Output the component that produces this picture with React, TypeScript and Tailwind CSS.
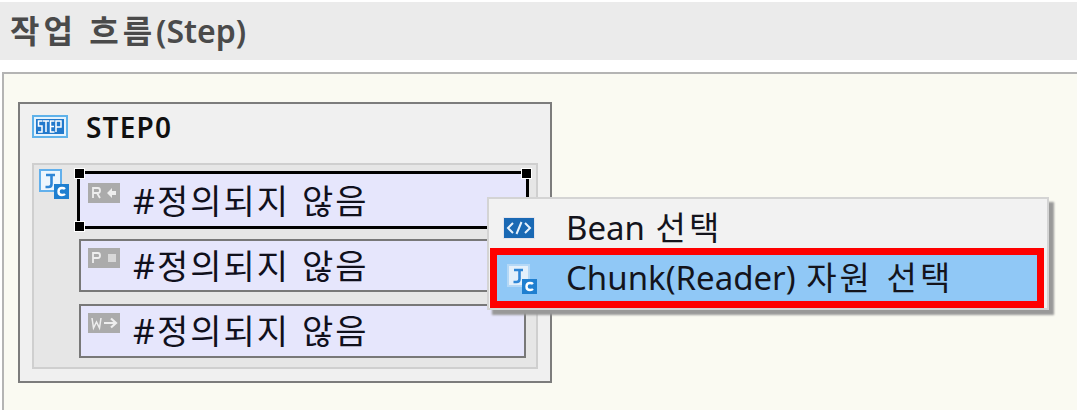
import type { ReactNode } from "react";

const font = "font-['Noto_Sans','Noto_Sans_CJK_KR',sans-serif]";

function JcIcon({ light = false }: { light?: boolean }) {
  return (
    <svg width="30" height="30" viewBox="0 0 30 30" className="shrink-0">
      <rect x="1" y="1" width="21" height="21" fill={light ? "#e4f0fb" : "#eef6fd"} stroke={light ? "#b4d8f6" : "#62b0ec"} strokeWidth="2" />
      <path d="M7 6h9M12.500 6v9q0 3-3 3H6.500" fill="none" stroke="#2f86d6" strokeWidth="2.600" />
      <rect x="15" y="15" width="15" height="15" fill="#1f7fd0" />
      <path d="M26 20q-1-1-3-1-3.500 0-3.500 3.500T23 26q2 0 3-1" fill="none" stroke="#fff" strokeWidth="2.400" />
    </svg>
  );
}

function StepIcon() {
  return (
    <svg width="36" height="23" viewBox="0 0 36 23" className="shrink-0">
      <rect x="1" y="1" width="34" height="21" fill="#e6f3fc" stroke="#5fb2ea" strokeWidth="2" />
      <rect x="4" y="4" width="28" height="15" fill="#2279cc" />
      <path d="M10.500 6H6.500v5h3.500v6H6M11 6h6M14 6v11M22.500 6H18.500v11h4M18.500 11.500h3.500M24 17V6h5v6h-5" fill="none" stroke="#fff" strokeWidth="1.500" />
    </svg>
  );
}

function BadgeIcon({ kind }: { kind: "R" | "P" | "W" }) {
  return (
    <svg width="32" height="20" viewBox="0 0 32 20" className="shrink-0">
      <rect width="32" height="20" fill="#ababab" />
      {kind === "R" && <path d="M5 15V5h5q2 0 2 2.500T10 10H5M9 10l3 5" fill="none" stroke="#eee" strokeWidth="1.800" />}
      {kind === "R" && <path d="M19 10l5-5v3h4v4h-4v3z" fill="#eee" />}
      {kind === "P" && <path d="M5 15V5h5q2 0 2 2.500T10 10H5" fill="none" stroke="#eee" strokeWidth="1.800" />}
      {kind === "P" && <rect x="20" y="6" width="8" height="8" fill="#d8d8d8" />}
      {kind === "W" && <path d="M4 5l1.500 10L8.500 9l3 6L13 5" fill="none" stroke="#eee" strokeWidth="1.500" />}
      {kind === "W" && <path d="M16 10h11M23 5.500l5 4.500-5 4.500" fill="none" stroke="#eee" strokeWidth="2.200" />}
    </svg>
  );
}

function Handle({ className }: { className: string }) {
  return <span className={`absolute h-[9px] w-[9px] bg-black outline outline-1 outline-white ${className}`} />;
}

function Row({ kind, selected, className, children }: { kind: "R" | "P" | "W"; selected?: boolean; className: string; children: ReactNode }) {
  return (
    <div className={`relative flex items-start bg-[#e6e6fc] ${selected ? "border-[3px] border-black pl-[8px] pt-[9px]" : "border-2 border-[#787878] pl-[7px] pt-[7px]"} ${className}`}>
      <BadgeIcon kind={kind} />
      <span className="ml-[13px] mt-[-2px] text-[34px] leading-[40px] tracking-[2px] text-[#10101c] [word-spacing:1px]">{children}</span>
      {selected && (
        <>
          <Handle className="left-[-5px] top-[-5px]" />
          <Handle className="right-[-5px] top-[-5px]" />
          <Handle className="left-[-5px] bottom-[-5px]" />
          <Handle className="right-[-5px] bottom-[-5px]" />
        </>
      )}
    </div>
  );
}

export default function App() {
  return (
    <div className={`relative flex h-[410px] w-[1077px] flex-col overflow-hidden bg-white pt-[2px] ${font}`}>
      {/* Title */}
      <div className="flex h-[58px] shrink-0 items-center bg-[#ebebeb] pl-[10px] text-[32px] font-semibold text-[#4a4a4a]">
        <span className="tracking-[4px]">작업 흐름</span>
        <span>(Step)</span>
      </div>

      {/* Canvas */}
      <div className="ml-[2px] mt-[12px] flex-1 border-l-[2px] border-t-[2px] border-[#b4b4b4] bg-[#fafaf2] pl-[14px] pt-[28px]">
        <div className="h-[281px] w-[534px] border-2 border-[#7c7c7c] bg-[#f0f0f0] pl-[12px]">
          <div className="flex h-[59px] items-center gap-[18px] pb-[14px] text-[28px] font-semibold leading-none tracking-[1.200px] text-[#101010]">
            <StepIcon />
            <span>STEP0</span>
          </div>
          <div className="flex h-[206px] w-[506px] gap-[8px] border-2 border-[#cfcfcf] bg-[#e6e6e6] pl-[5px] pt-[6px]">
            <div className="mt-[-2px]">
              <JcIcon />
            </div>
            <div className="flex flex-col">
              <Row kind="R" selected className="h-[58px] w-[452px]">#정의되지 않음</Row>
              <Row kind="P" className="ml-[2px] mt-[10px] h-[53px] w-[447px]">#정의되지 않음</Row>
              <Row kind="W" className="ml-[2px] mt-[12px] h-[54px] w-[447px]">#정의되지 않음</Row>
            </div>
          </div>
        </div>
      </div>

      {/* Context menu */}
      <div className="absolute left-[487px] top-[197px] h-[113px] w-[562px] border-2 border-[#d4d4d4] bg-[#f2f2f2] pl-[1px] shadow-[5px_5px_2px_#999999]">
        <div className="flex h-[49px] items-center pl-[13px] pt-[9px] text-[33px] text-[#14141c]">
          <svg width="32" height="22" viewBox="0 0 32 22" className="shrink-0">
            <rect x="0.500" y="0.500" width="31" height="21" fill="#1a69b4" stroke="#e4e4ec" />
            <path d="M10 6l-5 5 5 5M22 6l5 5-5 5M18.500 5l-5 12" fill="none" stroke="#e8f2fc" strokeWidth="2" />
          </svg>
          <span className="ml-[31px] [word-spacing:2px]">
            Bean <span className="tracking-[3px]">선택</span>
          </span>
        </div>
        <div className="flex h-[60px] w-[554px] items-center border-[7px] border-[#fe0000] bg-[#90c8f6] pl-[10px] text-[33px] text-[#14141c]">
          <div className="mt-[2px]">
            <JcIcon light />
          </div>
          <span className="ml-[29px] [word-spacing:2px]">
            Chunk(Reader) <span className="tracking-[3px]">자원 선택</span>
          </span>
        </div>
      </div>
    </div>
  );
}
